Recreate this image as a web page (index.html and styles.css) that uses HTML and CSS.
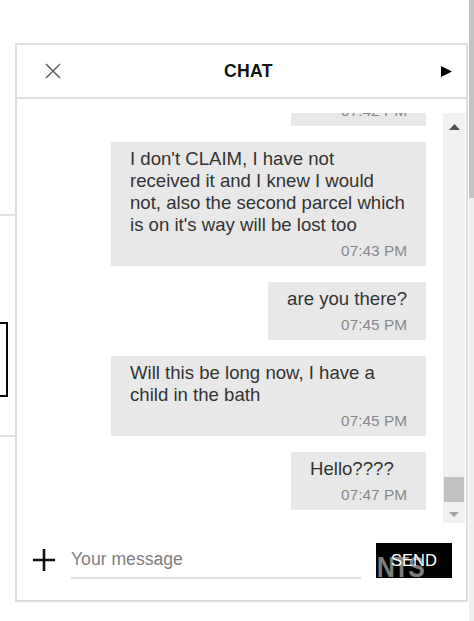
FILE: index.html
```html
<!DOCTYPE html>
<html lang="en">
<head>
    <meta charset="UTF-8">
    <meta name="viewport" content="width=device-width, initial-scale=1.0">
    <title>Chat</title>
    <link rel="stylesheet" href="styles.css">
</head>
<body>

    <div class="page">
        <div class="page-side">
            <div class="rule"></div>
            <div class="side-box"></div>
            <div class="rule rule-low"></div>
        </div>
    </div>
    <div class="page-scroll"><div class="page-thumb"></div></div>

    <section class="chat">
        <header class="chat-head">
            <button class="icon-btn close-btn" title="Close">
                <svg width="16" height="16" viewBox="0 0 16 16"><path d="M1 1L15 15M15 1L1 15" stroke="#666" stroke-width="1.6" fill="none"/></svg>
            </button>
            <h2>CHAT</h2>
            <button class="icon-btn play-btn" title="Open">
                <svg width="11" height="11" viewBox="0 0 11 11"><polygon points="0,0 11,5.5 0,11" fill="#000"/></svg>
            </button>
        </header>

        <div class="chat-body">
            <div class="messages">
                <div class="bubble">
                    <p>Thanks</p>
                    <span class="time">07:42 PM</span>
                </div>
                <div class="bubble">
                    <p>I don't CLAIM, I have not received it and I knew I would not, also the second parcel which is on it's way will be lost too</p>
                    <span class="time">07:43 PM</span>
                </div>
                <div class="bubble">
                    <p>are you there?</p>
                    <span class="time">07:45 PM</span>
                </div>
                <div class="bubble">
                    <p>Will this be long now, I have a child in the bath</p>
                    <span class="time">07:45 PM</span>
                </div>
                <div class="bubble">
                    <p>Hello????</p>
                    <span class="time">07:47 PM</span>
                </div>
            </div>
            <div class="scrollbar">
                <div class="sb-up"><svg width="11" height="6" viewBox="0 0 11 6"><polygon points="0,6 5.5,0 11,6" fill="#505050"/></svg></div>
                <div class="sb-track"><div class="sb-thumb"></div></div>
                <div class="sb-down"><svg width="10" height="5" viewBox="0 0 10 5"><polygon points="0,0 10,0 5,5" fill="#a3a3a3"/></svg></div>
            </div>
        </div>

        <form class="chat-foot">
            <button type="button" class="icon-btn plus-btn" title="Attach">
                <svg width="24" height="24" viewBox="0 0 24 24"><path d="M12 1V23M1 12H23" stroke="#111" stroke-width="2.6" fill="none"/></svg>
            </button>
            <input type="text" class="msg-input" placeholder="Your message">
            <button type="button" class="send-btn"><span class="mark">NTS</span><span class="send-label">SEND</span></button>
        </form>
    </section>

</body>
</html>
```

FILE: styles.css
```css
body {
    margin: 0;
    font-family: "Liberation Sans", Arial, sans-serif;
    background: #fff;
    color: #333;
}
.page {
    height: 621px;
}
.page-side {
    width: 15px;
    padding-top: 214px;
}
.rule {
    height: 2px;
    background: #e2e2e2;
}
.side-box {
    width: 6px;
    height: 71px;
    margin-top: 106px;
    margin-left: -2px;
    border: 2px solid #000;
}
.rule-low {
    margin-top: 38px;
}
.page-scroll {
    position: fixed;
    top: 0;
    right: 0;
    width: 5px;
    height: 621px;
    background: #efefef;
}
.page-thumb {
    height: 198px;
    background: #c4c4c4;
}

.chat {
    position: absolute;
    top: 43px;
    left: 15px;
    width: 453px;
    height: 559px;
    box-sizing: border-box;
    border: 2px solid #dedede;
    background: #fff;
    display: flex;
    flex-direction: column;
}
.icon-btn {
    background: none;
    border: none;
    padding: 0;
    cursor: pointer;
    display: flex;
}
.chat-head {
    height: 52px;
    flex-shrink: 0;
    border-bottom: 2px solid #dedede;
    display: grid;
    grid-template-columns: 1fr auto 1fr;
    align-items: center;
    padding: 0 14px 0 28px;
}
.chat-head h2 {
    margin: 0;
    font-size: 17.6px;
    font-weight: bold;
    color: #111;
    letter-spacing: 0.3px;
}
.play-btn {
    justify-self: end;
}

.chat-body {
    height: 410px;
    padding-top: 14px;
    display: flex;
}
.messages {
    flex: 1;
    overflow: hidden;
    display: flex;
    flex-direction: column;
    justify-content: flex-end;
    gap: 16px;
    padding-bottom: 13px;
}
.bubble {
    align-self: flex-end;
    flex-shrink: 0;
    box-sizing: border-box;
    min-width: 135px;
    max-width: 315px;
    margin-right: 17px;
    padding: 6px 19px 5px 19px;
    background: #e8e8e8;
}
.bubble p {
    margin: 0;
    font-size: 18.6px;
    line-height: 22px;
    color: #333;
}
.time {
    display: block;
    margin-top: 5px;
    text-align: right;
    font-size: 15.4px;
    line-height: 20px;
    color: #888;
}

.scrollbar {
    width: 22px;
    margin-right: 1px;
    background: #f1f1f1;
    display: flex;
    flex-direction: column;
}
.sb-up {
    height: 17px;
    display: flex;
    justify-content: center;
    align-items: flex-end;
}
.sb-track {
    flex: 1;
    display: flex;
    flex-direction: column;
    justify-content: flex-end;
    padding: 0 1px 4px;
}
.sb-thumb {
    height: 25px;
    background: #c1c1c1;
}
.sb-down {
    height: 17px;
    display: flex;
    justify-content: center;
    padding-top: 6px;
    box-sizing: border-box;
}

.chat-foot {
    flex: 1;
    margin: 0;
    display: flex;
    align-items: center;
    padding: 0 14px 3px 15px;
}
.plus-btn {
    margin-right: 15px;
}
.msg-input {
    width: 290px;
    height: 38px;
    box-sizing: border-box;
    padding: 0;
    border: none;
    border-bottom: 2px solid #dedede;
    font-family: "Liberation Sans", Arial, sans-serif;
    font-size: 17.6px;
    color: #333;
    outline: none;
}
.msg-input::placeholder {
    color: #808080;
}
.send-btn {
    position: relative;
    overflow: hidden;
    width: 76px;
    height: 35px;
    margin-left: 15px;
    padding: 0;
    border: none;
    background: #000;
    color: #fff;
    font-family: "Liberation Sans", Arial, sans-serif;
    font-size: 16.5px;
    cursor: pointer;
}
.mark {
    position: absolute;
    left: 1px;
    top: 8px;
    font-size: 29px;
    font-weight: bold;
    letter-spacing: -1px;
    color: rgba(255, 255, 255, 0.5);
    transform: scaleX(0.85);
    transform-origin: left;
}
.send-label {
    position: relative;
}
```
